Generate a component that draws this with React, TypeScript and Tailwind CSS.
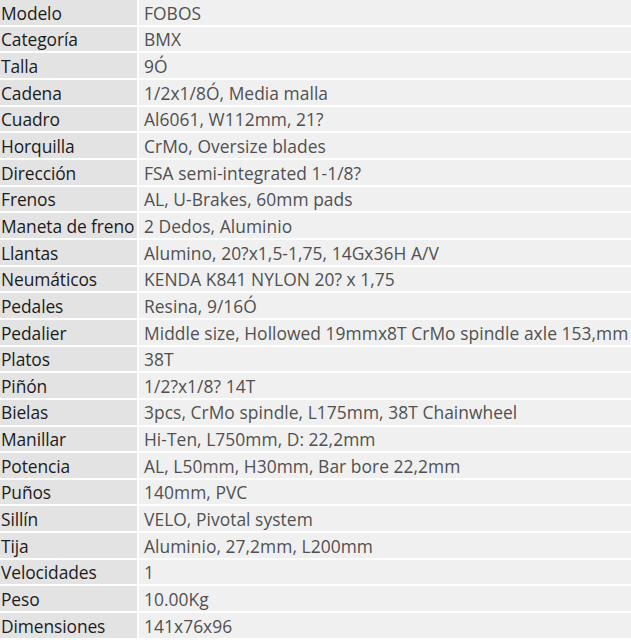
import React from 'react';

const specs: [string, string][] = [
  ['Modelo', 'FOBOS'],
  ['Categoría', 'BMX'],
  ['Talla', '9Ó'],
  ['Cadena', '1/2x1/8Ó, Media malla'],
  ['Cuadro', 'Al6061, W112mm, 21?'],
  ['Horquilla', 'CrMo, Oversize blades'],
  ['Dirección', 'FSA semi-integrated 1-1/8?'],
  ['Frenos', 'AL, U-Brakes, 60mm pads'],
  ['Maneta de freno', '2 Dedos, Aluminio'],
  ['Llantas', 'Alumino, 20?x1,5-1,75, 14Gx36H A/V'],
  ['Neumáticos', 'KENDA K841 NYLON 20? x 1,75'],
  ['Pedales', 'Resina, 9/16Ó'],
  ['Pedalier', 'Middle size, Hollowed 19mmx8T CrMo spindle axle 153,mm'],
  ['Platos', '38T'],
  ['Piñón', '1/2?x1/8? 14T'],
  ['Bielas', '3pcs, CrMo spindle, L175mm, 38T Chainwheel'],
  ['Manillar', 'Hi-Ten, L750mm, D: 22,2mm'],
  ['Potencia', 'AL, L50mm, H30mm, Bar bore 22,2mm'],
  ['Puños', '140mm, PVC'],
  ['Sillín', 'VELO, Pivotal system'],
  ['Tija', 'Aluminio, 27,2mm, L200mm'],
  ['Velocidades', '1'],
  ['Peso', '10.00Kg'],
  ['Dimensiones', '141x76x96'],
];

const App: React.FC = () => {
  return (
    <div className="w-[631px] h-[640px] overflow-hidden bg-white font-['Open_Sans',sans-serif] text-[17.4px] leading-none">
      <div className="grid grid-cols-[137px_1fr] gap-[2px]">
        {specs.map(([label, value]) => (
          <React.Fragment key={label}>
            <div className="h-[24.67px] bg-[#e3e3e3] pl-[1px] pt-[2px] flex items-center text-[#1c1c1c] font-medium whitespace-nowrap tracking-[-0.1px]">
              {label}
            </div>
            <div className="h-[24.67px] bg-[#f0f0f0] pl-[5px] pt-[2px] flex items-center text-[#505050] whitespace-nowrap tracking-[0.05px]">
              {value}
            </div>
          </React.Fragment>
        ))}
      </div>
    </div>
  );
};

export default App;
